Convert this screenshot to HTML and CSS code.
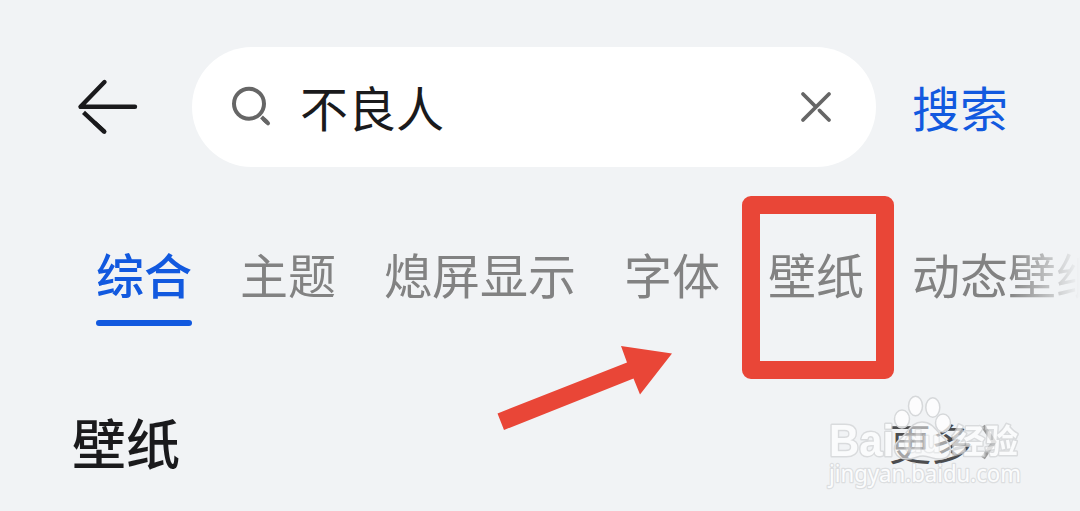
FILE: index.html
```html
<!DOCTYPE html>
<html lang="zh-CN">
<head>
    <meta charset="UTF-8">
    <meta name="viewport" content="width=device-width, initial-scale=1.0">
    <title>不良人 - 搜索</title>
    <link rel="stylesheet" href="styles.css">
</head>
<body>
    <div class="page">
        <header class="header">
            <svg class="back" width="64" height="60" viewBox="0 0 64 60" fill="none" stroke="#1a1a1c" stroke-width="4.4" stroke-linecap="round" stroke-linejoin="round">
                <path d="M29.500 5 L5.500 29.800 H60"/>
                <path d="M8.500 35.300 L29.500 55" stroke-linecap="butt"/>
                <path d="M20 46 L29.300 54.700"/>
            </svg>
            <div class="search-box">
                <svg class="search-icon" width="42" height="42" viewBox="0 0 42 42" fill="none" stroke="#666" stroke-width="4">
                    <circle cx="19" cy="17.800" r="15"/>
                    <path d="M31.5 31 L37 36.300"/>
                    <path d="M34 33.500 L38 37.300" stroke-linecap="round"/>
                </svg>
                <span class="keyword">不良人</span>
                <svg class="clear" width="34" height="34" viewBox="0 0 34 34" fill="none" stroke="#666" stroke-width="3.8" stroke-linecap="round">
                    <path d="M4 4 L17 17 M30 4 L4 30"/>
                    <path d="M20.5 20.5 L30 30"/>
                </svg>
            </div>
            <span class="search-btn">搜索</span>
        </header>

        <nav class="tabs">
            <span class="tab active">综合</span>
            <span class="tab">主题</span>
            <span class="tab">熄屏显示</span>
            <span class="tab">字体</span>
            <span class="tab">壁纸</span>
            <span class="tab">动态壁纸</span>
        </nav>

        <section class="section-head">
            <h2>壁纸</h2>
            <div class="more">
                <span>更多</span>
                <svg width="16" height="36" viewBox="0 0 16 36" fill="none" stroke="#999" stroke-width="4.5">
                    <path d="M2 2 L13 18 L2 34"/>
                </svg>
            </div>
        </section>

        <div class="mark-box"></div>
        <svg class="mark-arrow" width="180" height="90" viewBox="0 0 180 90">
            <path d="M2.5 68.5 L132 17.5 L126 1 L177 8.5 L145 49.5 L138.5 33.5 L9 85 Z" fill="#e94637"/>
        </svg>

        <svg class="watermark" width="204" height="100" viewBox="0 0 204 100">
            <g class="wm-shape">
                <ellipse cx="82" cy="28" rx="7.500" ry="9"/>
                <ellipse cx="95.500" cy="15" rx="7" ry="9.700"/>
                <ellipse cx="112.800" cy="16.500" rx="7" ry="9.700"/>
                <ellipse cx="123" cy="32" rx="7.500" ry="9"/>
                <path d="M102 31 C91 31 88 42 79 49 C70 57 75 68 87 68 C94 68 97 65 103 65 C110 65 114 69 121 68 C132 67 133 56 126 49 C117 42 114 31 102 31 Z" fill-opacity="0.5"/>
            </g>
            <text class="wm-text wm-latin" x="9" y="65" textLength="65" lengthAdjust="spacingAndGlyphs">Bai</text>
            <text class="wm-text wm-du" x="84" y="61">du</text>
            <text class="wm-text wm-cjk" x="132" y="62" textLength="66" lengthAdjust="spacingAndGlyphs">经验</text>
            <text class="wm-url" x="9" y="91" textLength="192" lengthAdjust="spacingAndGlyphs">jingyan.baidu.com</text>
        </svg>
    </div>
</body>
</html>
```
FILE: styles.css
```css
body {
    margin: 0;
    background: #f1f3f5;
    font-family: "Noto Sans CJK SC", sans-serif;
    color: #1a1a1c;
}
.page {
    position: relative;
    width: 1080px;
    height: 511px;
    overflow: hidden;
}
.header {
    display: flex;
    align-items: center;
    padding: 47px 0 0 75px;
}
.back {
    margin-right: 53px;
}
.search-box {
    display: flex;
    align-items: center;
    box-sizing: border-box;
    width: 684px;
    height: 120px;
    padding: 0 43px 0 38px;
    border-radius: 60px;
    background: #fff;
}
.keyword {
    flex: 1;
    margin-left: 28px;
    padding-bottom: 2px;
    font-size: 48px;
    line-height: 72px;
}
.search-btn {
    margin-left: 36px;
    padding-bottom: 2px;
    font-size: 48px;
    line-height: 72px;
    color: #1259df;
}
.tabs {
    display: flex;
    gap: 48px;
    margin-top: 70px;
    padding-left: 96px;
    white-space: nowrap;
    -webkit-mask-image: linear-gradient(to right, #000 1008px, transparent 1080px);
    mask-image: linear-gradient(to right, #000 1008px, transparent 1080px);
}
.tab {
    flex: none;
    height: 89px;
    font-size: 48px;
    line-height: 72px;
    color: #828282;
}
.tab.active {
    color: #1259df;
    font-weight: 500;
}
.tab.active::after {
    content: "";
    display: block;
    height: 6px;
    margin-top: 11px;
    border-radius: 3px;
    background: #1259df;
}
.section-head {
    display: flex;
    align-items: center;
    justify-content: space-between;
    margin-top: 76px;
    padding: 0 83px 0 72px;
}
.section-head h2 {
    margin: 0;
    font-size: 54px;
    line-height: 80px;
    font-weight: 500;
}
.more {
    display: flex;
    align-items: center;
    gap: 8px;
    font-size: 42px;
    line-height: 60px;
    color: #4c4d4f;
}

/* red highlight on the wallpaper tab */
.mark-box {
    position: absolute;
    left: 742px;
    top: 196px;
    box-sizing: border-box;
    width: 152px;
    height: 183px;
    border: 18px solid #e94637;
    border-radius: 9px;
}
.mark-arrow {
    position: absolute;
    left: 495px;
    top: 345px;
}

.watermark {
    position: absolute;
    left: 820px;
    top: 391px;
    overflow: visible;
}
.wm-shape {
    fill: #fff;
    fill-opacity: 0.75;
    stroke: #d6d8da;
    stroke-width: 1.5px;
}
.wm-text {
    fill: #fff;
    stroke: #d0d2d4;
    stroke-width: 3px;
    stroke-linejoin: round;
    paint-order: stroke;
    opacity: 0.7;
}
.wm-latin {
    font: bold 44px "Liberation Sans", sans-serif;
}
.wm-du {
    font: bold 30px "Liberation Sans", sans-serif;
    opacity: 0.4;
}
.wm-cjk {
    font: 700 33px "Noto Sans CJK SC", sans-serif;
}
.wm-url {
    font: 24px "Noto Sans", sans-serif;
    fill: #fbfcfd;
    stroke: #dcdee0;
    stroke-width: 2.5px;
    stroke-linejoin: round;
    paint-order: stroke;
}
```
